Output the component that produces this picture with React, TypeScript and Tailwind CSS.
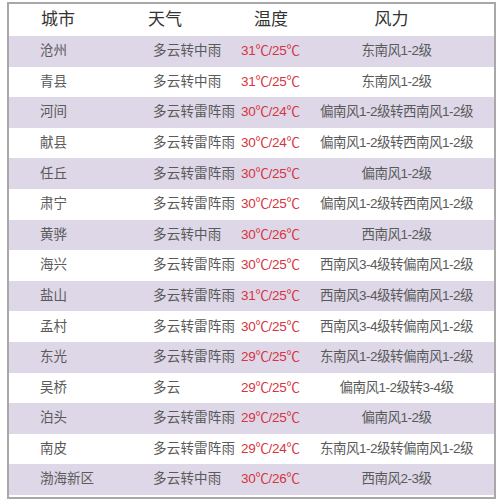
const rows = [
  ["沧州", "多云转中雨", "31℃/25℃", "东南风1-2级"],
  ["青县", "多云转中雨", "31℃/25℃", "东南风1-2级"],
  ["河间", "多云转雷阵雨", "30℃/24℃", "偏南风1-2级转西南风1-2级"],
  ["献县", "多云转雷阵雨", "30℃/24℃", "偏南风1-2级转西南风1-2级"],
  ["任丘", "多云转雷阵雨", "30℃/25℃", "偏南风1-2级"],
  ["肃宁", "多云转雷阵雨", "30℃/25℃", "偏南风1-2级转西南风1-2级"],
  ["黄骅", "多云转中雨", "30℃/26℃", "西南风1-2级"],
  ["海兴", "多云转雷阵雨", "30℃/25℃", "西南风3-4级转偏南风1-2级"],
  ["盐山", "多云转雷阵雨", "31℃/25℃", "西南风3-4级转偏南风1-2级"],
  ["孟村", "多云转雷阵雨", "30℃/25℃", "西南风3-4级转偏南风1-2级"],
  ["东光", "多云转雷阵雨", "29℃/25℃", "东南风1-2级转偏南风1-2级"],
  ["吴桥", "多云", "29℃/25℃", "偏南风1-2级转3-4级"],
  ["泊头", "多云转雷阵雨", "29℃/25℃", "偏南风1-2级"],
  ["南皮", "多云转雷阵雨", "29℃/24℃", "东南风1-2级转偏南风1-2级"],
  ["渤海新区", "多云转中雨", "30℃/26℃", "西南风2-3级"],
]

export default function App() {
  return (
    <div className="w-[500px] h-[503px] bg-white pt-[2px] pl-[7px] font-['Liberation_Sans','Noto_Sans_CJK_SC',sans-serif]">
      <div className="w-[489px] h-[497px] border-2 border-[#a8a8a8] bg-white">
        <div className="grid grid-cols-[137px_93px_80px_1fr] h-[32px] items-center text-[17px] text-[#333333]">
          <span className="pl-[32px]">城市</span>
          <span className="pl-[2px]">天气</span>
          <span className="pl-[15px]">温度</span>
          <span className="text-center pr-[30px]">风力</span>
        </div>
        {rows.map((r, i) => (
          <div
            key={r[0]}
            className={
              "grid grid-cols-[137px_93px_80px_1fr] h-[30.6px] items-center text-[13.5px] text-[#5a5a5a] " +
              (i % 2 === 0 ? "bg-[#ddd7e8]" : "bg-white")
            }
          >
            <span className="pl-[31px]">{r[0]}</span>
            <span className="pl-[7px] whitespace-nowrap tracking-[0.2px]">{r[1]}</span>
            <span className="pl-[2px] text-[#d8343e] whitespace-nowrap tracking-[-0.3px]">{r[2]}</span>
            <span className="text-center whitespace-nowrap pr-[20px] tracking-[-0.5px]">{r[3]}</span>
          </div>
        ))}
      </div>
    </div>
  )
}
